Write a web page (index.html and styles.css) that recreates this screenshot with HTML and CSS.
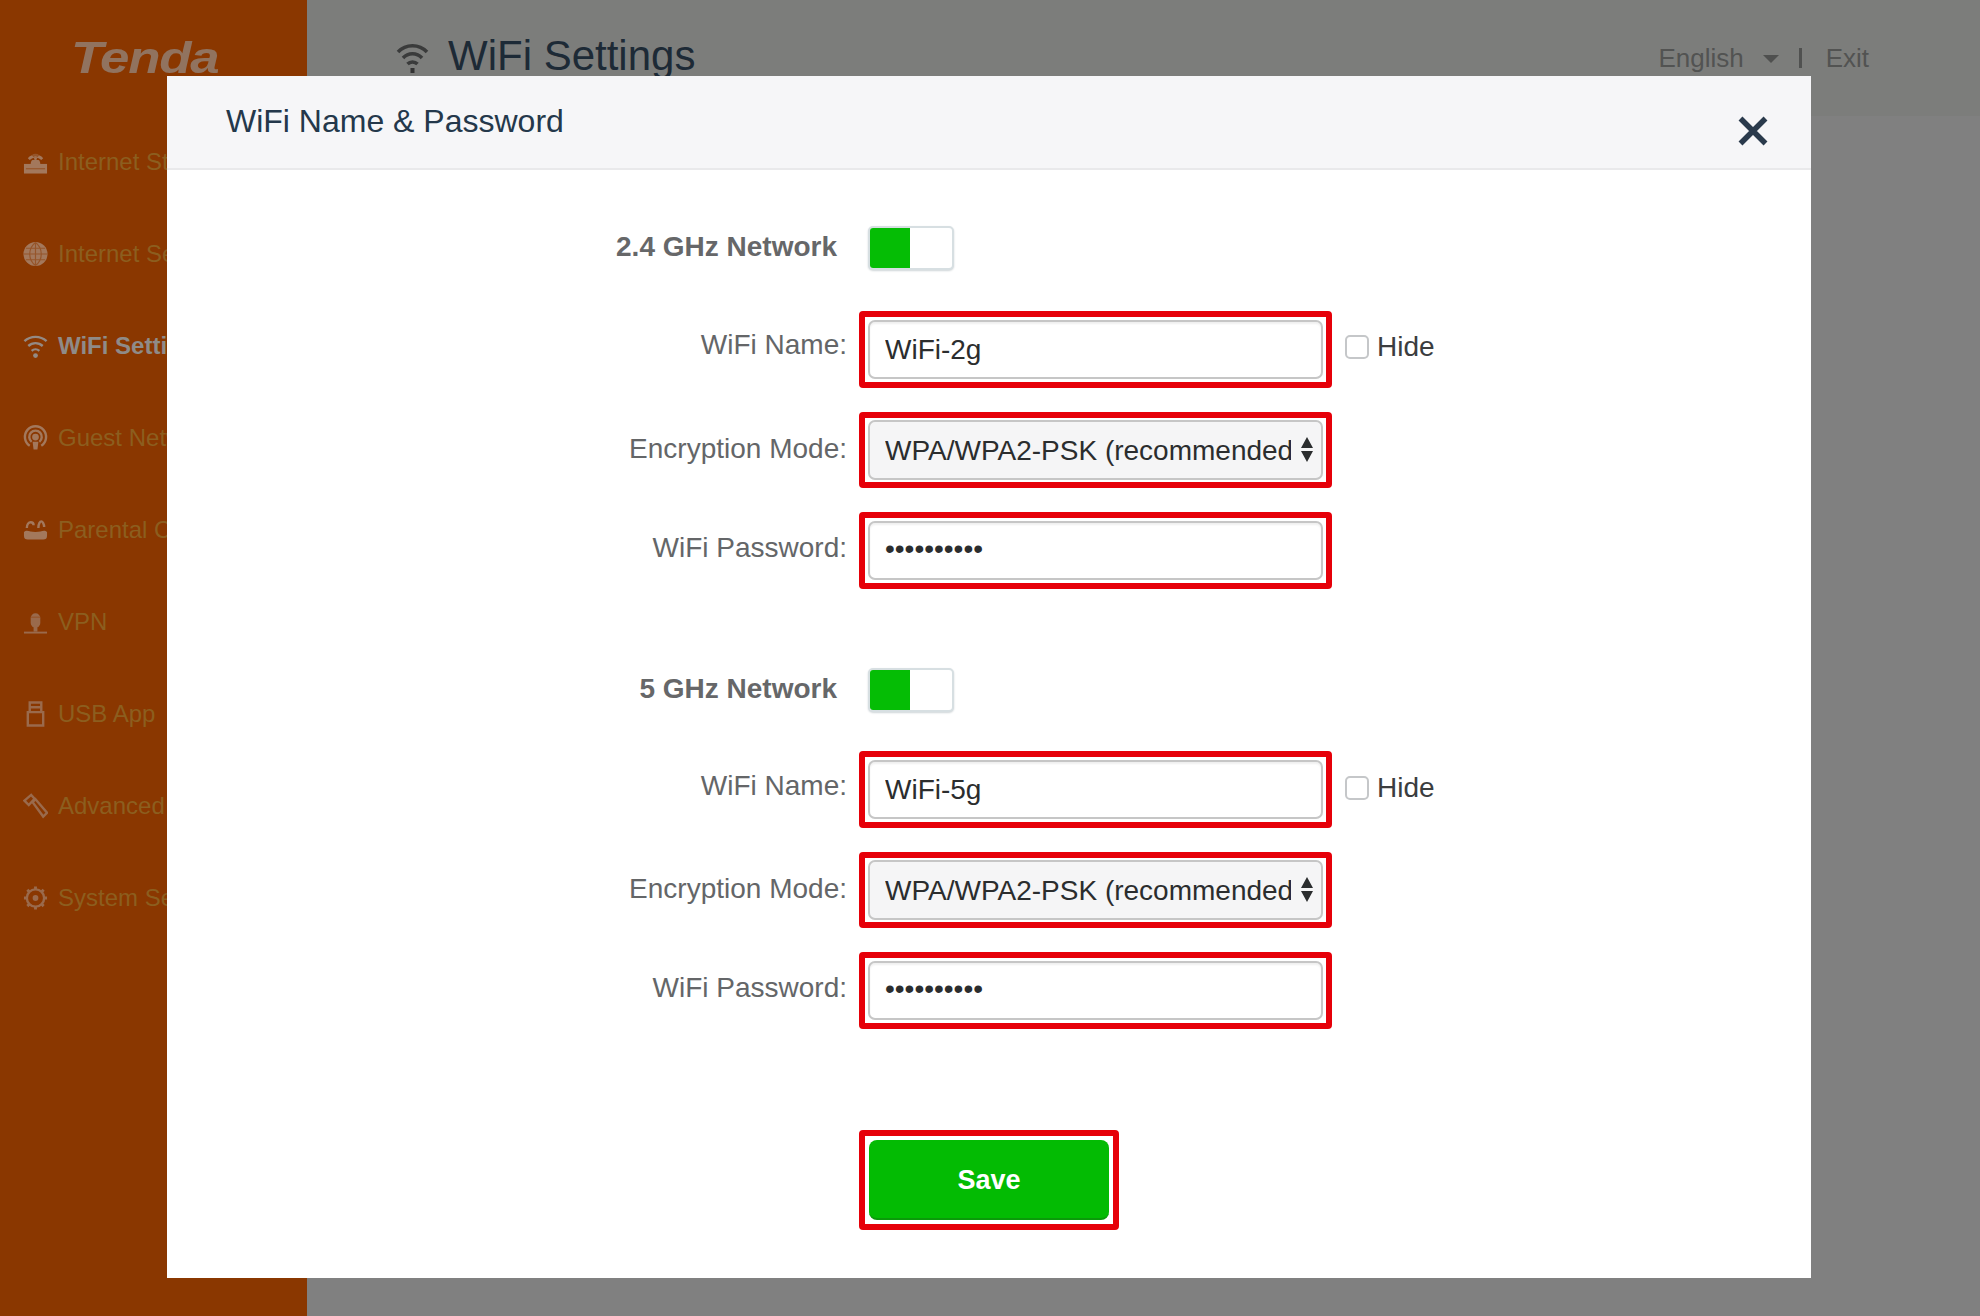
FILE: index.html
```html
<!DOCTYPE html>
<html lang="en">
<head>
<meta charset="utf-8">
<title>WiFi Settings</title>
<link rel="stylesheet" href="styles.css">
</head>
<body>
<div class="app">
  <aside class="sidebar">
    <div class="logo"><span class="logo-text">Tenda</span></div>
    <nav class="nav">
      <a class="nav-item"><svg class="nav-icon" viewBox="0 0 26 26"><path d="M1 15h24v10H1z"/><path class="cut" d="M3 20h20"/><path d="M8 15c0-2 1-4 2-4h6c1 0 2 2 2 4z"/><path d="M5 9a11 11 0 0 1 16 0l-2 2a8 8 0 0 0-12 0z"/><path d="M9 6a6 6 0 0 1 8 0l-2 2a3 3 0 0 0-4 0z" class="dim"/><circle cx="13" cy="9.500" r="1.500"/></svg><span>Internet Status</span></a>
      <a class="nav-item"><svg class="nav-icon" viewBox="0 0 26 26"><circle cx="13" cy="13" r="12.500"/><path class="cut" d="M13 1v24M1 13h24M3 7h20M3 19h20M13 1c-8 6-8 18 0 24M13 1c8 6 8 18 0 24"/></svg><span>Internet Settings</span></a>
      <a class="nav-item active"><svg class="nav-icon" viewBox="0 0 26 26"><path class="arc" d="M1.500 8a17 17 0 0 1 23 0M5.500 13a11 11 0 0 1 15 0M9 18a6 6 0 0 1 8 0"/><circle cx="13" cy="23" r="2.500"/></svg><span>WiFi Settings</span></a>
      <a class="nav-item"><svg class="nav-icon" viewBox="0 0 26 26"><path class="arc" d="M7 21a11 11 0 1 1 12 0"/><path class="arc" d="M9 17a6.500 6.500 0 1 1 8 0"/><circle cx="13" cy="12" r="3.500"/><path d="M10 17h6l-1 8h-4z"/></svg><span>Guest Network</span></a>
      <a class="nav-item"><svg class="nav-icon" viewBox="0 0 26 26"><path d="M1 15c3-3 6 0 12 0s9-3 12 0v4a4 4 0 0 1-4 4H5a4 4 0 0 1-4-4z"/><path class="arc" d="M4 11c0-4 2-6 4-6s3 1 3 3M16 11c0-5 2-7 3-7s3 2 3 6"/></svg><span>Parental Control</span></a>
      <a class="nav-item"><svg class="nav-icon" viewBox="0 0 26 26"><path d="M8 9a5 5 0 0 1 10 0v5a5 5 0 0 1-10 0z"/><path class="cut" d="M8 8h10"/><path d="M11 18h4v5h-4z"/><path d="M1 23h24v2H1z"/></svg><span>VPN</span></a>
      <a class="nav-item"><svg class="nav-icon" viewBox="0 0 26 26"><path class="arc" d="M7 1h12v10H7zM5 11h16v14H5zM7 6h12"/></svg><span>USB App</span></a>
      <a class="nav-item"><svg class="nav-icon" viewBox="0 0 26 26"><path class="arc" d="M1.500 7.500l7-6 3.500 4-6 6.500zM10 9l3-3 12 14-4 4z"/></svg><span>Advanced</span></a>
      <a class="nav-item"><svg class="nav-icon" viewBox="0 0 26 26"><circle class="arc" cx="13" cy="13" r="9"/><circle cx="13" cy="13" r="3"/><path class="dash" d="M13 1v24M1 13h24M4.500 4.500l17 17M21.500 4.500l-17 17"/></svg><span>System Settings</span></a>
    </nav>
  </aside>
  <main class="main">
    <header class="topbar">
      <div class="page-title">
        <svg class="title-icon" viewBox="0 0 33 30"><path class="arc" d="M2 9a20 20 0 0 1 29 0M7 15a13 13 0 0 1 19 0M11.500 21a7 7 0 0 1 10 0"/><path d="M14.500 25h4v5h-4z"/></svg>
        <h1>WiFi Settings</h1>
      </div>
      <div class="top-actions">
        <span>English</span><i class="caret"></i><b class="divider"></b><span>Exit</span>
      </div>
    </header>
  </main>
</div>

<section class="modal">
  <header class="modal-head">
    <h2>WiFi Name &amp; Password</h2>
    <svg class="close" viewBox="0 0 30 30"><path d="M2.500 2.500l25 25M27.500 2.500l-25 25"/></svg>
  </header>
  <form class="modal-body">
    <div class="row net-row">
      <span class="net-label">2.4 GHz Network</span>
      <span class="toggle"><i></i></span>
    </div>
    <div class="row">
      <label class="field-label name">WiFi Name:</label>
      <div class="mark"><input class="control" type="text" value="WiFi-2g"></div>
      <label class="hide"><input type="checkbox"><span>Hide</span></label>
    </div>
    <div class="row">
      <label class="field-label enc">Encryption Mode:</label>
      <div class="mark select-mark"><select class="control select"><option>WPA/WPA2-PSK (recommended)</option></select>
        <svg class="updown" viewBox="0 0 12 25"><path d="M6 0l6 11H0zM6 25l6-11H0z"/></svg></div>
    </div>
    <div class="row">
      <label class="field-label pw">WiFi Password:</label>
      <div class="mark"><input class="control pass" type="password" value="1234567890"></div>
    </div>

    <div class="row net-row second">
      <span class="net-label">5 GHz Network</span>
      <span class="toggle"><i></i></span>
    </div>
    <div class="row lower">
      <label class="field-label name">WiFi Name:</label>
      <div class="mark"><input class="control" type="text" value="WiFi-5g"></div>
      <label class="hide"><input type="checkbox"><span>Hide</span></label>
    </div>
    <div class="row">
      <label class="field-label enc">Encryption Mode:</label>
      <div class="mark select-mark"><select class="control select"><option>WPA/WPA2-PSK (recommended)</option></select>
        <svg class="updown" viewBox="0 0 12 25"><path d="M6 0l6 11H0zM6 25l6-11H0z"/></svg></div>
    </div>
    <div class="row">
      <label class="field-label pw">WiFi Password:</label>
      <div class="mark"><input class="control pass" type="password" value="1234567890"></div>
    </div>

    <div class="row save-row">
      <span></span>
      <div class="save-mark"><button class="save" type="button">Save</button></div>
    </div>
  </form>
</section>
</body>
</html>
```

FILE: styles.css
```css
* { box-sizing: border-box; }
html, body { margin: 0; height: 1316px; overflow: hidden; }
body { font-family: "Liberation Sans", Arial, sans-serif; background: #808080; position: relative; }

.app { display: flex; height: 1316px; }

.sidebar { width: 307px; flex: none; background: #8a3700; }
.logo { height: 116px; padding: 36px 0 0 71px; }
.logo-text { font: italic bold 44px/1 "Liberation Sans", sans-serif; letter-spacing: -1px; color: #91735f; display: block; transform: scaleX(1.2); transform-origin: left center; }
.nav { display: flex; flex-direction: column; }
.nav-item { height: 92px; display: flex; align-items: center; gap: 10px; padding-left: 23px; font-size: 24px; color: #8c5e1f; white-space: nowrap; }
.nav-item.active { color: #8f8b88; font-weight: bold; }
.nav-icon { width: 25px; height: 26px; flex: none; fill: #a3785c; }
.active .nav-icon { fill: #948a84; }
.nav-icon .arc { fill: none; stroke: #a3785c; stroke-width: 2.5; }
.active .nav-icon .arc { stroke: #948a84; }
.nav-icon .cut { fill: none; stroke: #96552a; stroke-width: 1.2; }
.nav-icon .dim { fill: #96552a; }
.nav-icon .dash { fill: none; stroke: #a3785c; stroke-width: 3; stroke-dasharray: 3 18; }
.nav-item:nth-child(n+6) .nav-icon { fill: #9a6a4c; }
.nav-item:nth-child(n+6) .nav-icon .arc, .nav-item:nth-child(n+6) .nav-icon .dash { stroke: #9a6a4c; }

.main { flex: 1; }
.topbar { height: 116px; background: #7c7d7b; display: flex; justify-content: space-between; padding: 0 111px 0 89px; }
.page-title { display: flex; align-items: flex-start; gap: 19px; padding-top: 32px; }
.title-icon { width: 33px; height: 30px; margin-top: 11px; fill: #333; }
.title-icon .arc { fill: none; stroke: #3a3b3b; stroke-width: 3.5; }
.page-title h1 { margin: 0; font-size: 42px; line-height: 48px; font-weight: normal; color: #1d2a36; }
.top-actions { display: flex; align-items: center; height: 116px; font-size: 26px; color: #525352; }
.caret { width: 0; height: 0; margin: 2px 20px 0 19px; border: 8px solid transparent; border-top-color: #4f504f; border-bottom: 0; }
.divider { width: 3px; height: 20px; background: #505150; margin-right: 24px; }

.modal { position: absolute; left: 167px; top: 76px; width: 1644px; height: 1202px; background: #fff; }
.modal-head { height: 94px; background: #f6f6f8; border-bottom: 2px solid #e9e9eb; display: flex; justify-content: space-between; padding: 20px 43px 0 59px; }
.modal-head h2 { margin: 0; font-size: 32px; line-height: 50px; font-weight: normal; color: #24384b; }
.close { width: 30px; height: 30px; margin-top: 20px; fill: none; stroke: #2a3a4c; stroke-width: 5.5; }

.modal-body { display: flex; flex-direction: column; gap: 24px; padding-top: 56px; }
.row { display: grid; grid-template-columns: 680px 473px auto; column-gap: 12px; align-items: center; }
.net-row { margin-bottom: 17px; grid-template-columns: 670px auto; column-gap: 31px; }
.net-row.second { margin-top: 55px; margin-bottom: 15px; }
.net-label { font-size: 28px; font-weight: bold; color: #666769; text-align: right; padding-bottom: 2px; }
.toggle { width: 86px; height: 44px; border: 2px solid #d7dfe2; border-radius: 5px; background: #fff; display: block; box-shadow: 0 1px 2px #cfd5d8; }
.toggle i { display: block; width: 40px; height: 100%; background: #05bd05; border-radius: 3px 0 0 3px; }
.field-label { font-size: 28px; color: #646668; text-align: right; }
.field-label.name { padding-bottom: 9px; }
.lower .field-label.name { padding-bottom: 7px; }
.field-label.enc { padding-bottom: 3px; }
.field-label.pw { padding-bottom: 6px; }

.mark { position: relative; border: 6px solid #e60009; border-radius: 4px; padding: 3px; background: #fff; }
.control { display: block; width: 100%; height: 59px; padding: 0 15px; border: 2px solid #c6c6c6; border-radius: 7px; background: #fff; font: 28px "Liberation Sans", Arial, sans-serif; color: #2b2d2e; outline: 0; box-shadow: inset 0 2px 2px #f0f0f0; }
.pass { padding-bottom: 4px; }
.select-mark { padding-top: 2px; padding-bottom: 2px; }
.select { height: 60px; appearance: none; -webkit-appearance: none; background: #f5f5f6; padding-right: 30px; box-shadow: none; }
.updown { position: absolute; right: 13px; top: 19px; width: 12px; height: 25px; fill: #2b2d2e; }

.hide { display: flex; align-items: center; gap: 8px; margin-left: 1px; font-size: 28px; color: #3b3d3f; padding-bottom: 5px; }
.lower .hide { padding-bottom: 3px; }
.hide input { appearance: none; -webkit-appearance: none; width: 24px; height: 24px; margin: 0; border: 2px solid #c5c7c9; border-radius: 5px; background: #fff; }

.save-row { margin-top: 77px; grid-template-columns: 680px 260px; }
.save-mark { border: 6px solid #e60009; border-radius: 4px; padding: 4px; width: 260px; height: 100px; background: #fff; }
.save { display: block; width: 240px; height: 80px; padding-top: 3px; border: 0; border-bottom: 2px solid #0a9a0a; border-radius: 8px; background: #03bb03; color: #fff; font: bold 27px "Liberation Sans", Arial, sans-serif; }
```
